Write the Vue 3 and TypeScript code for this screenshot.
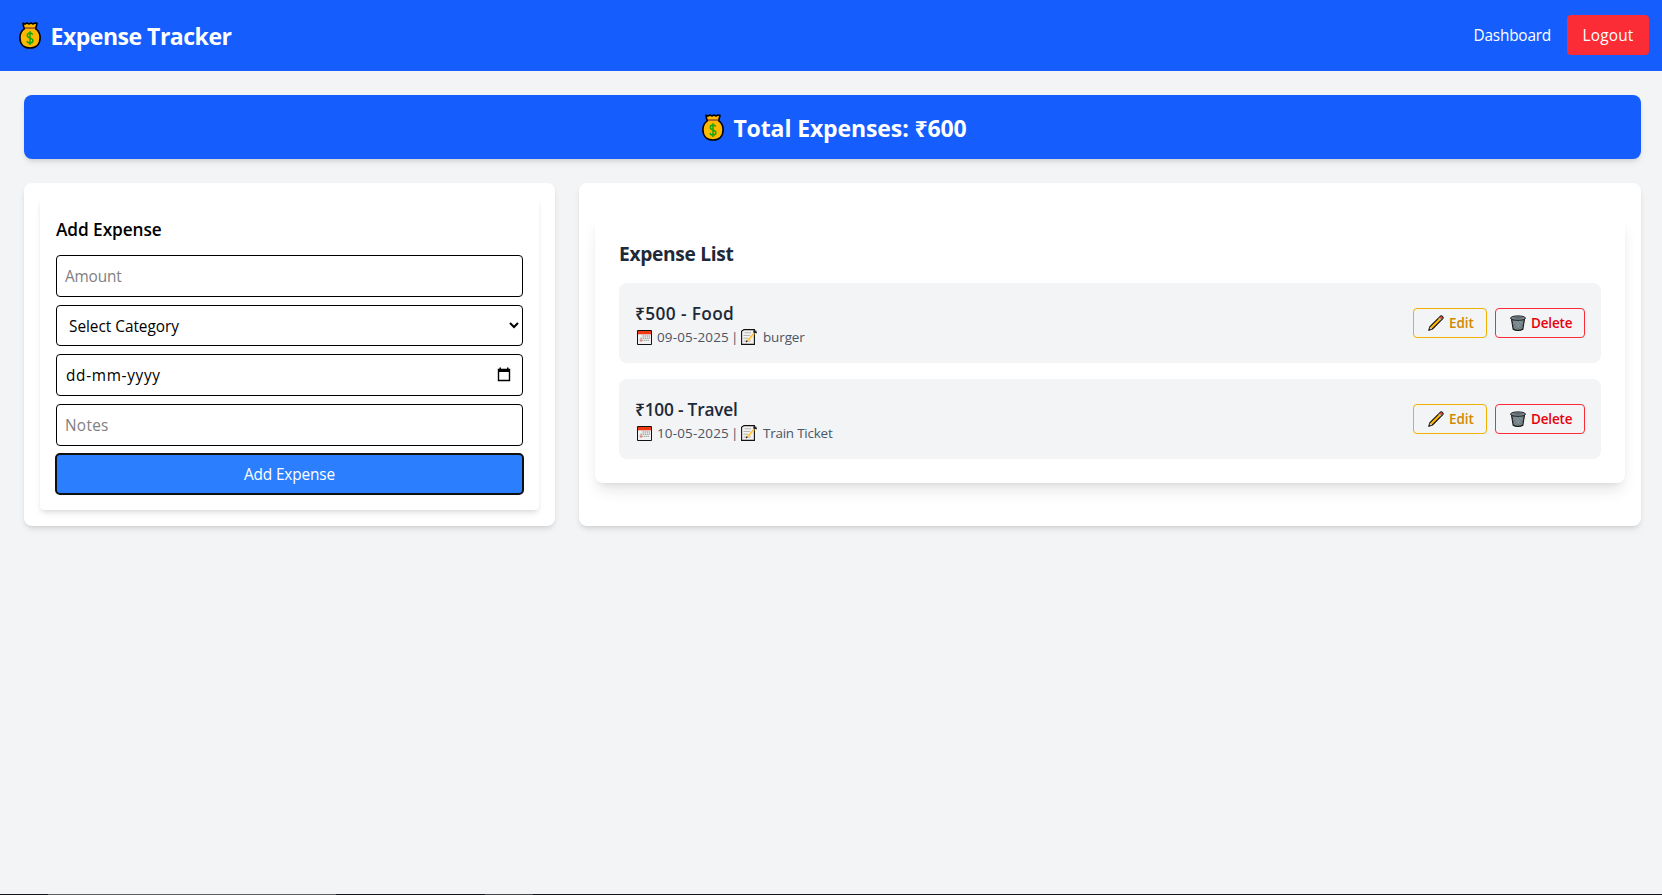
<script setup lang="ts">
import { ref } from 'vue'

interface Expense {
  id: number
  amount: number
  category: string
  date: string
  notes: string
  fit: string
}

const categories = ['Food', 'Travel', 'Shopping', 'Bills', 'Other']
const category = ref('')
const amount = ref('')
const notes = ref('')

const expenses = ref<Expense[]>([
  { id: 1, amount: 500, category: 'Food', date: '09-05-2025', notes: 'burger', fit: 'loose' },
  { id: 2, amount: 100, category: 'Travel', date: '10-05-2025', notes: 'Train Ticket', fit: 'tight' },
])
</script>

<template>
  <div class="viewport">
    <svg class="defs" width="0" height="0" aria-hidden="true">
      <symbol id="bag" viewBox="0 0 22 27">
        <path d="M4 1.2 6 1.9 8 1.1 10 1.9 12 1.1 14 1.9 16 1.1 18 1.4 17.1 5.1 16.4 6.6C19.6 8.600 21.100 12 21.100 15.800 21.100 22.300 17 26 11 26S.9 22.300.9 15.800C.9 12 2.600 8.600 5.600 6.600L4.700 5.100Z" fill="#ffb900" stroke="#000" stroke-width="1.6" stroke-linejoin="round" />
        <path d="M5.900 5.200H16.300V6.900H5.900Z" fill="#a4582c" />
        <path d="M13.700 12.800C13.100 11.500 12.200 11.100 11 11.100 9.400 11.100 8.300 12 8.300 13.500 8.300 16.900 13.900 15.300 13.900 18.600 13.900 20.200 12.700 21.100 11 21.100 9.500 21.100 8.400 20.400 8 19M11 9.200V23" fill="none" stroke="#16a60c" stroke-width="1.500" />
      </symbol>
      <symbol id="calendar" viewBox="0 0 15 15">
        <path d="M.5.5H14.500V14.500H.5Z" fill="#f1f1f1" stroke="#111" />
        <path d="M1 1H14V4.300H1Z" fill="#f03a17" />
        <path d="M5.500 6H13M3.500 8.200H13M2.500 10.400H12" stroke="#aaa" stroke-width="1.400" stroke-dasharray="1.500 .6" />
        <path d="M3 9.500H5V11.500H3Z" fill="#f0796a" />
      </symbol>
      <symbol id="memo" viewBox="0 0 17 16">
        <path d="M.6 2.300 3 .6H13.400V15.400H.6Z" fill="#f2f2f2" stroke="#111" stroke-width="1.100" />
        <path d="M3.500 3.800H10M2.500 6.500H9M2.500 9.200H7M2.500 12H10" stroke="#b5b5b5" />
        <path d="M6 12.300 13.500 3.800" stroke="#ffc83d" stroke-width="1.900" />
        <path d="M5.200 13.200 6.200 11.600M12.800 4.200 15.300 1.700M12.400 1.900 15.800 4" stroke="#222" stroke-width="1.300" />
      </symbol>
      <symbol id="pencil" viewBox="0 0 16 16">
        <path d="M.8 15.200 2 11.600 12.300 1.300C13.700.2 15.800 2.400 14.700 3.700L4.400 14Z" fill="#ffb900" stroke="#111" stroke-width="1.200" stroke-linejoin="round" />
        <path d="M1.200 14.800 2.200 12 4 13.700Z" fill="#e8c9a5" />
        <path d="M.8 15.200 1.300 13.500 2.500 14.700Z" fill="#111" />
        <path d="M11.300 2.600 12.300 1.700C13.500.9 15.100 2.600 14.200 3.700L13.300 4.600Z" fill="#e74856" />
        <path d="M10.900 3.200 12.700 5" stroke="#bbb" stroke-width="1.100" />
      </symbol>
      <symbol id="trash" viewBox="0 0 16 16">
        <path d="M1.400 3.300 3.200 14.300C5.500 15.800 10.500 15.800 12.800 14.300L14.600 3.300Z" fill="#69797e" stroke="#111" stroke-width="1.100" />
        <path d="M3.300 6 10.500 14M6 6 12.300 12.500M9.500 6 13 9.500M12.700 6 5.300 14M10 6 3.800 12.500M6.500 6 3 9.500" stroke="#9ba7ab" stroke-width=".7" />
        <path d="M.6 3.200C.6.100 15.400.1 15.400 3.200 15.400 6 .6 6 .6 3.200Z" fill="#7d8b90" stroke="#222" />
        <path d="M3 3C5 1.700 11 1.700 13 3 11 4 5 4 3 3Z" fill="#5d696e" />
      </symbol>
    </svg>

    <div class="page">
      <header class="navbar">
        <h1 class="brand"><svg class="bag"><use href="#bag" /></svg><span>Expense Tracker</span></h1>
        <nav class="nav">
          <a class="link">Dashboard</a>
          <button class="logout" type="button">Logout</button>
        </nav>
      </header>

      <main class="content">
        <section class="total">
          <svg class="bag"><use href="#bag" /></svg><span>Total Expenses: ₹600</span>
        </section>

        <div class="columns">
          <section class="card">
            <form class="form" @submit.prevent>
              <h2 class="form-title">Add Expense</h2>
              <input v-model="amount" class="field amount" type="text" placeholder="Amount">
              <select v-model="category" class="field select">
                <option value="">Select Category</option>
                <option v-for="c in categories" :key="c" :value="c">{{ c }}</option>
              </select>
              <div class="field date">
                <span>dd-mm-yyyy</span>
                <svg class="picker" viewBox="0 0 14 15">
                  <path d="M1.500 2.500H12.500V13.500H1.500Z" fill="none" stroke="#000" stroke-width="1.400" />
                  <path d="M1 2H13V5H1ZM2.500.5H4V2H2.500ZM10 .5H11.500V2H10Z" />
                </svg>
              </div>
              <input v-model="notes" class="field notes" type="text" placeholder="Notes">
              <button class="submit" type="submit">Add Expense</button>
            </form>
          </section>

          <section class="card">
            <div class="list">
              <h2 class="list-title">Expense List</h2>
              <ul class="rows">
                <li v-for="e in expenses" :key="e.id" class="row">
                  <div>
                    <p class="name" :class="e.fit">₹{{ e.amount }} - {{ e.category }}</p>
                    <p class="meta">
                      <svg class="calendar"><use href="#calendar" /></svg>
                      <span class="day">{{ e.date }}</span>
                      <span class="bar">|</span>
                      <svg class="memo"><use href="#memo" /></svg>
                      <span class="note" :class="e.fit">{{ e.notes }}</span>
                    </p>
                  </div>
                  <div class="actions">
                    <button class="action edit" type="button"><svg><use href="#pencil" /></svg><span>Edit</span></button>
                    <button class="action delete" type="button"><svg><use href="#trash" /></svg><span>Delete</span></button>
                  </div>
                </li>
              </ul>
            </div>
          </section>
        </div>
      </main>
    </div>
    <div class="taskbar" />
  </div>
</template>

<style>
body {
  background: #f3f4f6;
}
</style>

<style scoped>
.viewport,
.viewport * {
  box-sizing: border-box;
}

.viewport {
  display: flex;
  flex-direction: column;
  width: 100%;
  height: 100vh;
  overflow: hidden;
  background: #f3f4f6;
  color: #000;
  font-family: "Open Sans", "Noto Sans", sans-serif;
  font-size: 15.36px;
  line-height: 24px;
}

.defs {
  position: absolute;
}

.page {
  flex: 1;
  width: 1665px;
}

h1,
h2,
p,
ul {
  margin: 0;
  padding: 0;
}

button,
input,
select {
  margin: 0;
  font: inherit;
}

.navbar {
  display: flex;
  align-items: center;
  justify-content: space-between;
  height: 71px;
  padding: 15px 16px 16px;
  background: #155dfc;
  color: #fff;
}

.brand {
  display: flex;
  align-items: center;
  padding: 1px 0 0 3px;
  font-size: 23.04px;
  font-weight: 700;
  line-height: 32px;
  letter-spacing: -0.5px;
}

.bag {
  flex: none;
  width: 22px;
  height: 27px;
  margin-right: 9px;
}

.brand .bag {
  margin-right: 9.5px;
}

.nav {
  display: flex;
  align-items: center;
  gap: 16px;
}

.link {
  padding-top: 2px;
  letter-spacing: -0.2px;
}

.logout {
  width: 82px;
  height: 40px;
  padding: 2px 0 0;
  border: 0;
  border-radius: 4px;
  background: #fb2c36;
  color: #fff;
  letter-spacing: 0.2px;
}

.content {
  padding: 24px;
}

.total {
  display: flex;
  align-items: center;
  justify-content: center;
  height: 64px;
  margin-bottom: 24px;
  padding: 1px 0 0 4px;
  border-radius: 8px;
  background: #155dfc;
  box-shadow: 0 4px 6px -1px rgba(0, 0, 0, 0.1), 0 2px 4px -2px rgba(0, 0, 0, 0.1);
  color: #fff;
  font-size: 23.04px;
  font-weight: 700;
  line-height: 32px;
  letter-spacing: -0.13px;
}

.total span {
  padding-top: 1px;
}

.columns {
  display: grid;
  grid-template-columns: 1fr 2fr;
  gap: 24px;
}

.card {
  padding: 16px;
  border-radius: 8px;
  background: #fff;
  box-shadow: 0 4px 6px -1px rgba(0, 0, 0, 0.1), 0 2px 4px -2px rgba(0, 0, 0, 0.1);
}

.form {
  display: flex;
  flex-direction: column;
  gap: 8px;
  padding: 16px;
  border-radius: 4px;
  box-shadow: 0 4px 6px -1px rgba(0, 0, 0, 0.1), 0 2px 4px -2px rgba(0, 0, 0, 0.1);
}

.form-title {
  margin-bottom: 4px;
  padding-top: 1px;
  font-size: 17.28px;
  font-weight: 600;
  line-height: 27px;
  letter-spacing: -0.08px;
}

.field {
  width: 100%;
  height: 42px;
  padding: 8px;
  border: 1px solid #000;
  border-radius: 4px;
  background: #fff;
  color: #000;
  outline: none;
}

.field::placeholder {
  color: #808080;
  opacity: 1;
}

.amount {
  letter-spacing: -0.16px;
}

.notes {
  letter-spacing: 0.3px;
}

.select {
  height: 41px;
  padding: 9px 8px 7px;
  letter-spacing: -0.02px;
}

.date {
  display: flex;
  align-items: center;
  justify-content: space-between;
  padding: 8px 11px 8px 9px;
  letter-spacing: 0.68px;
}

.date span {
  padding-top: 2px;
}

.picker {
  width: 14px;
  height: 15px;
  margin-bottom: 1px;
}

.submit {
  height: 40px;
  padding: 2px 0 0;
  border: 0;
  border-radius: 4px;
  outline: 2px solid #101010;
  outline-offset: -1px;
  background: #2b7fff;
  color: #fff;
  letter-spacing: -0.14px;
}

.form .submit {
  margin-top: -0.5px;
}

.list {
  margin-top: 16px;
  padding: 24px;
  border-radius: 8px;
  box-shadow: 0 10px 15px -3px rgba(0, 0, 0, 0.1), 0 4px 6px -4px rgba(0, 0, 0, 0.1);
}

.list-title {
  margin-bottom: 15px;
  padding-top: 1px;
  color: #1e2939;
  font-size: 19.2px;
  font-weight: 700;
  line-height: 28px;
  letter-spacing: -0.32px;
}

.rows {
  display: flex;
  flex-direction: column;
  gap: 16px;
  list-style: none;
}

.row {
  display: flex;
  align-items: center;
  justify-content: space-between;
  height: 80px;
  padding: 16px;
  border-radius: 8px;
  background: #f3f4f6;
}

.name {
  padding-top: 1px;
  color: #1e2939;
  font-size: 17.28px;
  font-weight: 600;
  line-height: 27px;
}

.name.loose {
  letter-spacing: 0.38px;
}

.name.tight {
  letter-spacing: -0.2px;
}

.meta {
  display: flex;
  align-items: center;
  padding-left: 2px;
  color: #4a5565;
  font-size: 13.44px;
  line-height: 20px;
}

.calendar {
  width: 15px;
  height: 15px;
  margin-right: 5px;
}

.day {
  width: 74px;
  letter-spacing: 0.18px;
}

.bar {
  width: 10px;
}

.memo {
  width: 17px;
  height: 16px;
  margin-right: 5px;
}

.note.loose {
  letter-spacing: -0.1px;
}

.note.tight {
  letter-spacing: -0.22px;
}

.actions {
  display: flex;
  gap: 8px;
}

.action {
  display: flex;
  align-items: center;
  height: 30px;
  padding: 0 0 0 14px;
  border: 1px solid;
  border-radius: 4px;
  background: transparent;
  font-size: 13.44px;
  font-weight: 600;
  line-height: 20px;
}

.action svg {
  width: 16px;
  height: 16px;
  margin-right: 5px;
}

.edit {
  width: 74px;
  border-color: #f0b100;
  color: #d08700;
}

.delete {
  width: 90px;
  border-color: #fb2c36;
  color: #e7000b;
  letter-spacing: -0.15px;
}

.taskbar {
  flex: none;
  height: 1px;
  background: linear-gradient(90deg, #15131a 48px, #606064 48px 336px, #15131a 336px 485px, #45454a 485px 533px, #15131a 533px);
}
</style>
